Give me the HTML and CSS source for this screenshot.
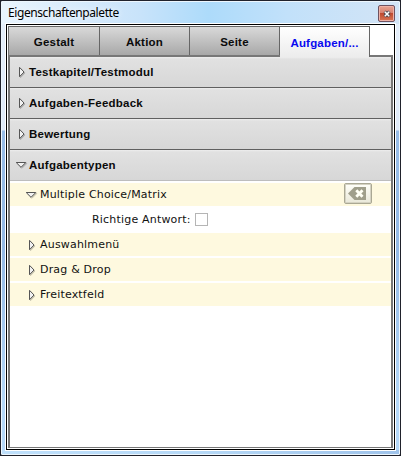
FILE: index.html
```html
<!DOCTYPE html>
<html lang="de">
<head>
<meta charset="utf-8">
<title>Eigenschaftenpalette</title>
<link rel="stylesheet" href="styles.css">
</head>
<body>
<div class="window">
  <header class="titlebar">
    <h1 class="title">Eigenschaftenpalette</h1>
    <button class="close" aria-label="Schließen"><svg width="8" height="8" viewBox="0 0 8 8"><path d="M1.6 1.6 6.4 6.4M6.4 1.6 1.6 6.4" stroke="#45454f" stroke-width="3.2"/><path d="M1.8 1.8 6.2 6.2M6.2 1.8 1.8 6.2" stroke="#fff" stroke-width="1.6"/></svg></button>
  </header>
  <main class="client">
    <nav class="tabs">
      <div class="tab">Gestalt</div>
      <div class="tab">Aktion</div>
      <div class="tab">Seite</div>
      <div class="tab active">Aufgaben/...</div>
    </nav>
    <div class="panel">
      <div class="section"><svg class="arrow" width="8" height="14" viewBox="0 0 8 14"><path d="M1.5 2.3v9.4L6 7z"/></svg><span>Testkapitel/Testmodul</span></div>
      <div class="section"><svg class="arrow" width="8" height="14" viewBox="0 0 8 14"><path d="M1.5 2.3v9.4L6 7z"/></svg><span>Aufgaben-Feedback</span></div>
      <div class="section"><svg class="arrow" width="8" height="14" viewBox="0 0 8 14"><path d="M1.5 2.3v9.4L6 7z"/></svg><span>Bewertung</span></div>
      <div class="section open"><svg class="arrow down" width="12" height="8" viewBox="0 0 12 8"><path d="M1.2 1.5h9.6L6 6.3z"/></svg><span>Aufgabentypen</span></div>
      <div class="items">
        <div class="item first"><svg class="arrow down" width="12" height="8" viewBox="0 0 12 8"><path d="M1.2 1.5h9.6L6 6.3z"/></svg><span>Multiple Choice/Matrix</span>
          <button class="clear" aria-label="Löschen"><svg width="18" height="13" viewBox="0 0 18 13"><path d="M0 6.5 6.5 0H18v13H6.5z" fill="#a09f8b"/><path d="m8.3 3.2 6.2 6.6m0-6.6-6.2 6.6" stroke="#fffff4" stroke-width="2.8"/></svg></button>
        </div>
        <label class="answer"><span>Richtige Antwort:</span><i class="check"></i></label>
        <div class="item"><svg class="arrow" width="8" height="14" viewBox="0 0 8 14"><path d="M1.5 2.3v9.4L6 7z"/></svg><span>Auswahlmenü</span></div>
        <div class="item"><svg class="arrow" width="8" height="14" viewBox="0 0 8 14"><path d="M1.5 2.3v9.4L6 7z"/></svg><span>Drag &amp; Drop</span></div>
        <div class="item"><svg class="arrow" width="8" height="14" viewBox="0 0 8 14"><path d="M1.5 2.3v9.4L6 7z"/></svg><span>Freitextfeld</span></div>
      </div>
    </div>
  </main>
</div>
</body>
</html>
```
FILE: styles.css
```css
* { box-sizing: border-box; }
body { margin: 0; background: #22242e; overflow: hidden; }
button { padding: 0; font: inherit; }
svg { display: block; flex: none; }
.window {
  width: 401px; height: 456px;
  border: 1px solid #20222c; border-radius: 2px;
  box-shadow: inset 0 0 0 1px #edf6fd;
  padding: 2px 5px 5px;
  background:
    linear-gradient(90deg, #e9f4fd 0, #c8e3fa 35%, #addbfa 52%, #c2e1fa 72%, #d3e4f6 100%) 0 0 / 100% 23px no-repeat,
    linear-gradient(90deg, #bfe0fb 0, #b5d8f6 50%, #9fc3ea 100%) 0 100% / 100% 5px no-repeat,
    linear-gradient(#e4eefa 23px, #dfeaf8 129px, #97bce7 130px, #94b9e5 250px, #b4d7f7 400px);
}
.titlebar { height: 21px; display: flex; justify-content: space-between; padding: 0 0 0 2px; }
.title { margin: 2px 0 0; font: 12px/16px "Noto Sans", "Open Sans", sans-serif; color: #000; letter-spacing: -.41px; white-space: nowrap; text-shadow: 0 0 6px #fff; }
.close {
  width: 17px; height: 17px; margin: 2px 0 0; display: grid; place-items: center;
  border: 1px solid #6e5260; border-radius: 2px;
  box-shadow: inset 0 0 0 1px #eeb1a6;
  background: linear-gradient(#e6a493 0, #d98271 45%, #bf4a30 50%, #d97655 100%);
}
.client {
  height: 426px; background: #fff; border: 1px solid #000;
  outline: 1px solid #fff; padding: 1px; display: flex; flex-direction: column;
}
.tabs { display: flex; height: 29px; flex: none; border-left: 1px solid #747474; }
.tab {
  width: 91px; height: 29px; border: solid #666; border-width: 1px 1px 0 0;
  background: linear-gradient(#d9d9d9, #a8a8a8);
  text-align: center; font: bold 11.5px/31px "Liberation Sans", Arial, sans-serif; letter-spacing: .2px; color: #0b0b0b;
}
.tab + .tab { width: 90px; }
.tab + .tab.active { height: 31px; position: relative; background: linear-gradient(#fff, #ececec); color: #0808f0; line-height: 33px; }
.panel {
  flex: 1; display: flex; flex-direction: column;
  border: 2px solid #777; border-bottom-width: 1px; background: #fff;
}
.section {
  height: 31px; flex: none; display: flex; align-items: center; padding-left: 8px; gap: 3px;
  border-bottom: 1px solid #606060; background: linear-gradient(#eee 0, #e1e1e1 2px, #d7d7d7 100%);
  font: bold 11.5px/30px "Liberation Sans", Arial, sans-serif; letter-spacing: .24px; color: #0b0b0b;
}
.section.open { border-bottom-color: #bdbdbd; padding-left: 5px; gap: 2px; }
.arrow { fill: #f2f2f2; stroke: #555; stroke-width: 1; filter: drop-shadow(1px 1px 0 #0003); }
.items { padding-top: 2px; font: 11px/23px "DejaVu Sans", Verdana, sans-serif; letter-spacing: .19px; color: #111; }
.item { height: 23px; display: flex; align-items: center; gap: 4px; padding-left: 18px; margin-bottom: 2px; background: #fef9df; }
.item.first { padding-left: 15px; gap: 3px; margin: 0; }
.clear {
  width: 28px; height: 21px; margin: 0 19px 2px auto; padding: 0 2px 0 0; display: grid; place-items: center;
  border: 1px solid #aaa894; border-radius: 2px; background: linear-gradient(#fffff9, #e9e8d9);
  box-shadow: inset 0 0 0 1px #d5d3c3;
}
.answer { height: 27px; display: flex; align-items: center; gap: 4px; padding-left: 82px; }
.check { width: 13px; height: 13px; border: 1px solid #b5b5b5; background: #fff; }
```
